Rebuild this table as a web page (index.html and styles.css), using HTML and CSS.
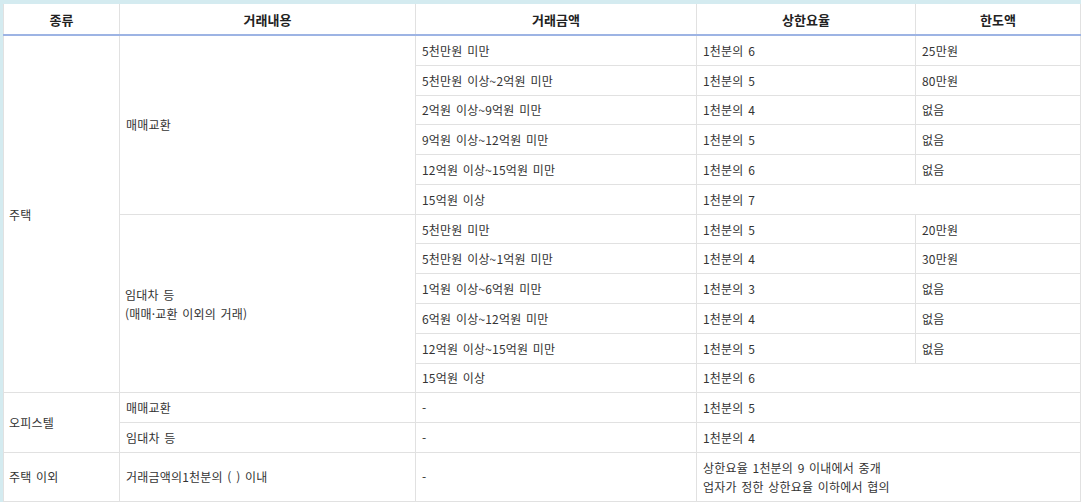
FILE: index.html
```html
<!DOCTYPE html>
<html lang="ko">
<head>
<meta charset="utf-8">
<link rel="stylesheet" href="styles.css">
</head>
<body>
<table class="fee-table">
  <colgroup>
    <col class="c1"><col class="c2"><col class="c3"><col class="c4"><col class="c5">
  </colgroup>
  <thead>
    <tr><th>종류</th><th>거래내용</th><th>거래금액</th><th>상한요율</th><th>한도액</th></tr>
  </thead>
  <tbody>
    <tr><td rowspan="12">주택</td><td rowspan="6">매매교환</td><td>5천만원 미만</td><td>1천분의 6</td><td>25만원</td></tr>
    <tr><td>5천만원 이상~2억원 미만</td><td>1천분의 5</td><td>80만원</td></tr>
    <tr><td>2억원 이상~9억원 미만</td><td>1천분의 4</td><td>없음</td></tr>
    <tr><td>9억원 이상~12억원 미만</td><td>1천분의 5</td><td>없음</td></tr>
    <tr><td>12억원 이상~15억원 미만</td><td>1천분의 6</td><td>없음</td></tr>
    <tr><td>15억원 이상</td><td colspan="2">1천분의 7</td></tr>
    <tr><td rowspan="6">임대차 등<br>(매매·교환 이외의 거래)</td><td>5천만원 미만</td><td>1천분의 5</td><td>20만원</td></tr>
    <tr><td>5천만원 이상~1억원 미만</td><td>1천분의 4</td><td>30만원</td></tr>
    <tr><td>1억원 이상~6억원 미만</td><td>1천분의 3</td><td>없음</td></tr>
    <tr><td>6억원 이상~12억원 미만</td><td>1천분의 4</td><td>없음</td></tr>
    <tr><td>12억원 이상~15억원 미만</td><td>1천분의 5</td><td>없음</td></tr>
    <tr><td>15억원 이상</td><td colspan="2">1천분의 6</td></tr>
    <tr><td rowspan="2">오피스텔</td><td>매매교환</td><td>-</td><td colspan="2">1천분의 5</td></tr>
    <tr><td>임대차 등</td><td>-</td><td colspan="2">1천분의 4</td></tr>
    <tr><td>주택 이외</td><td>거래금액의1천분의 ( ) 이내</td><td>-</td><td colspan="2">상한요율 1천분의 9 이내에서 중개<br>업자가 정한 상한요율 이하에서 협의</td></tr>
  </tbody>
</table>
</body>
</html>
```
FILE: styles.css
```css
html, body {
  background: #d4ebf0;
}
body {
  margin: 4px 0 0 3px;
  font-family: "Noto Sans CJK KR", "Noto Sans", sans-serif;
  font-size: 12px;
  color: #333;
}
.fee-table {
  border-collapse: collapse;
  table-layout: fixed;
  width: 1077px;
  background: #fff;
}
.c1 { width: 116px; }
.c2 { width: 296px; }
.c3 { width: 281px; }
.c4 { width: 219px; }
.c5 { width: 165px; }
.fee-table th {
  height: 30px;
  padding: 0 6px;
  font-size: 13px;
  font-weight: bold;
  color: #222;
  text-align: center;
  border-left: 1px solid #e1e1e1;
  border-right: 1px solid #e1e1e1;
  border-bottom: 2px solid #9db4e4;
}
.fee-table td {
  padding: 4.9px 5px 4.9px 6px;
  line-height: 19px;
  text-align: left;
  vertical-align: middle;
  border: 1px solid #e1e1e1;
  word-spacing: 1px;
  letter-spacing: 0.2px;
}
.fee-table td:first-child[rowspan],
.fee-table tr:last-child td:first-child {
  padding-left: 5px;
}
```
